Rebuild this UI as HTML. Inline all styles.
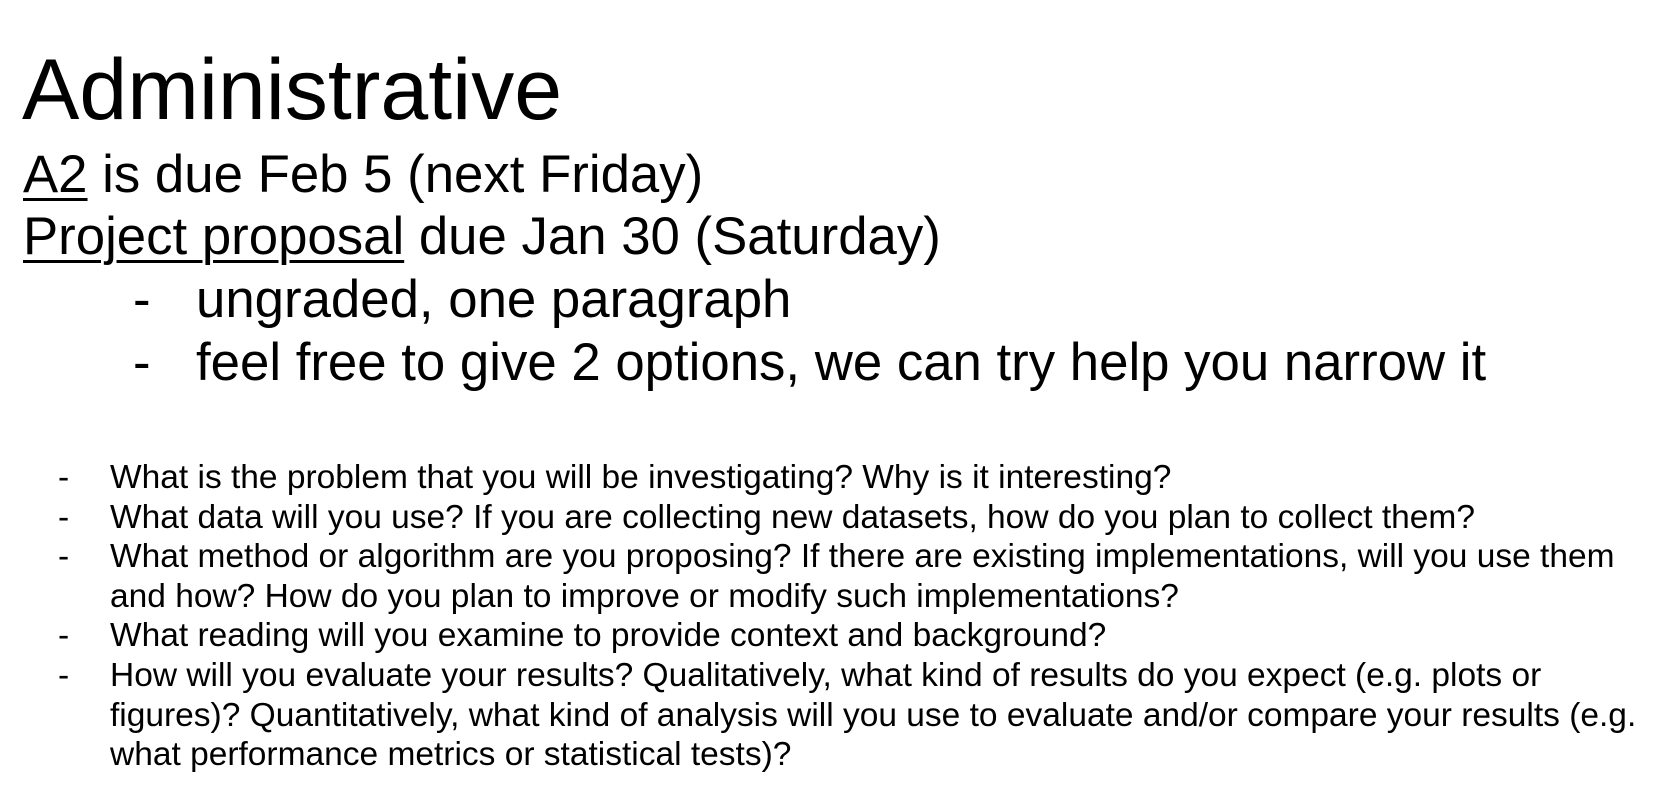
<!DOCTYPE html>
<html><head><meta charset="utf-8"><style>
html,body{margin:0;padding:0;background:#fff;width:1669px;height:810px;overflow:hidden}
body{font-family:"Liberation Sans",Arial,sans-serif;color:#000;position:relative}
.l{position:absolute;white-space:nowrap;line-height:normal}
.t{font-size:86px;left:22px;top:41px}
.m{font-size:52.75px}
.s{font-size:33.5px}
u{text-decoration:underline;text-decoration-thickness:3px;text-underline-offset:6px}
</style></head><body>
<div class="l t">Administrative</div>
<div class="l m" style="left:23px;top:144px"><u>A2</u> is due Feb 5 (next Friday)</div>
<div class="l m" style="left:23px;top:206px"><u>Project proposal</u> due Jan 30 (Saturday)</div>
<div class="l m" style="left:133px;top:269px">-</div>
<div class="l m" style="left:196px;top:269px">ungraded, one paragraph</div>
<div class="l m" style="left:133px;top:332px">-</div>
<div class="l m" style="left:196px;top:332px">feel free to give 2 options, we can try help you narrow it</div>

<div class="l s" style="left:58px;top:459px">-</div>
<div class="l s" style="left:110px;top:459px">What is the problem that you will be investigating? Why is it interesting?</div>
<div class="l s" style="left:58px;top:499px">-</div>
<div class="l s" style="left:110px;top:499px">What data will you use? If you are collecting new datasets, how do you plan to collect them?</div>
<div class="l s" style="left:58px;top:538px">-</div>
<div class="l s" style="left:110px;top:538px">What method or algorithm are you proposing? If there are existing implementations, will you use them</div>
<div class="l s" style="left:110px;top:578px">and how? How do you plan to improve or modify such implementations?</div>
<div class="l s" style="left:58px;top:617px">-</div>
<div class="l s" style="left:110px;top:617px">What reading will you examine to provide context and background?</div>
<div class="l s" style="left:58px;top:657px">-</div>
<div class="l s" style="left:110px;top:657px">How will you evaluate your results? Qualitatively, what kind of results do you expect (e.g. plots or</div>
<div class="l s" style="left:110px;top:697px">figures)? Quantitatively, what kind of analysis will you use to evaluate and/or compare your results (e.g.</div>
<div class="l s" style="left:110px;top:736px">what performance metrics or statistical tests)?</div>
</body></html>
